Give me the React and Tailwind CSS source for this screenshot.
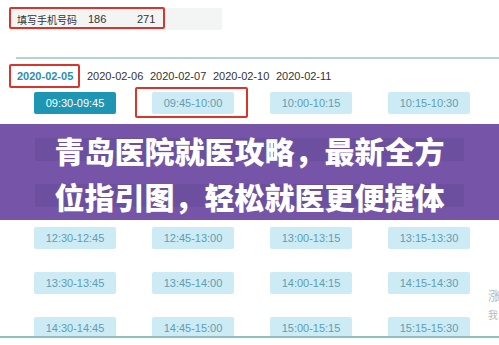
const dates = ['2020-02-05', '2020-02-06', '2020-02-07', '2020-02-10', '2020-02-11'];

// rows 2 and 3 sit under the title banner, so their labels are left out
const rows = [
  ['09:30-09:45', '09:45-10:00', '10:00-10:15', '10:15-10:30'],
  ['', '', '', ''],
  ['', '', '', ''],
  ['12:30-12:45', '12:45-13:00', '13:00-13:15', '13:15-13:30'],
  ['13:30-13:45', '13:45-14:00', '14:00-14:15', '14:15-14:30'],
  ['14:30-14:45', '14:45-15:00', '15:00-15:15', '15:15-15:30'],
];

const sans = "font-['Liberation_Sans','Noto_Sans_CJK_SC',sans-serif]";

function Slot({ label, active }) {
  return (
    <div
      className={`w-[82px] h-[22px] rounded-[2px] flex items-center justify-center text-[11px] ${
        active ? 'bg-[#1d95b3] text-white' : 'bg-[#cdebf4] text-[#5f9db2]'
      }`}
    >
      {label}
    </div>
  );
}

export default function App() {
  return (
    <div className={`relative w-[499px] h-[345px] overflow-hidden bg-white ${sans}`}>
      {/* phone input */}
      <div className="pt-[8px] pl-[10px]">
        <div className="relative w-[212px] h-[22px] bg-[#f3f4f4] flex items-center text-[11px] text-[#333]">
          <span className="ml-[7px] w-[71px] font-['Noto_Sans_CJK_SC',sans-serif] text-[10px]">填写手机号码</span>
          <span className="w-[49px]">186</span>
          <span>271</span>
          <div className="absolute left-[-1px] top-[-1px] w-[156px] h-[22px] border-2 border-[#d8352c] rounded-[2px]" />
        </div>
      </div>

      <div className="mt-[27px] ml-[16px] h-[2px] bg-[#b2d3d0]" />

      {/* dates */}
      <div className="relative flex items-center h-[24px] mt-[5px] pl-[17px] text-[11px]">
        {dates.map((d, i) => (
          <span
            key={d}
            className={i === 0 ? 'w-[70px] text-[#2b8db0] font-bold' : 'w-[63px] text-[#333]'}
          >
            {d}
          </span>
        ))}
        <div className="absolute left-[9px] top-[0px] w-[71px] h-[24px] border-2 border-[#d8352c] rounded-[2px]" />
      </div>

      {/* slots */}
      <div className="mt-[4px] pl-[34px] flex flex-col gap-[23px]">
        {rows.map((r, ri) => (
          <div key={ri} className="relative flex gap-[36px]">
            {r.map((s, si) => (
              <Slot key={si} label={s} active={ri === 0 && si === 0} />
            ))}
            {ri === 0 && (
              <div className="absolute left-[101px] top-[-5px] w-[113px] h-[31px] border-2 border-[#d8352c] rounded-[2px]" />
            )}
          </div>
        ))}
      </div>

      {/* watermark on right edge */}
      <div className="absolute left-[488px] top-[287px] flex flex-col gap-[4px] text-[13px] leading-[16px] text-[#b9b9b9] font-['Noto_Sans_CJK_SC',sans-serif]">
        <span>涨</span>
        <span className="text-[10px]">我</span>
      </div>

      <div className="absolute left-0 top-[336px] w-full h-[2px] bg-[#8fc0bd]" />
      <div className="absolute left-0 top-[338px] w-full h-[7px] bg-white" />

      {/* title banner */}
      <div className="absolute left-0 top-[124px] w-full h-[96px] bg-[#7654a8] flex flex-col pt-[14px] gap-[23px]">
        {['青岛医院就医攻略，最新全方', '位指引图，轻松就医更便捷体'].map((t) => (
          <div
            key={t}
            className="mx-[35px] h-[23px] bg-[#6c4f9e] flex items-center justify-center"
          >
            <span className="text-[30px] leading-none font-black text-white font-['Noto_Sans_CJK_SC',sans-serif] whitespace-nowrap">
              {t}
            </span>
          </div>
        ))}
      </div>
    </div>
  );
}
